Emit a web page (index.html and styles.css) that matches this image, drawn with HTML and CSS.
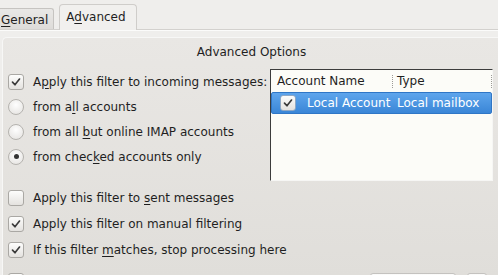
FILE: index.html
```html
<!DOCTYPE html>
<html>
<head>
<meta charset="utf-8">
<link rel="stylesheet" href="styles.css">
</head>
<body>
<div class="tabbar">
  <div class="tab tab-general"><u>G</u>eneral</div>
  <div class="tab tab-active">A<u>d</u>vanced</div>
</div>
<div class="panel">
  <div class="title">Advanced Options</div>
  <div class="top">
    <div class="left">
      <div class="row">
        <span class="cb"><svg viewBox="0 0 16 16"><path d="M4 8.2 L6.8 11.2 L12 4.6"/></svg></span>
        <span>A<u>p</u>ply this filter to incoming messages:</span>
      </div>
      <div class="row"><span class="radio"></span><span>from a<u>l</u>l accounts</span></div>
      <div class="row"><span class="radio"></span><span>from all <u>b</u>ut online IMAP accounts</span></div>
      <div class="row"><span class="radio on"></span><span>from chec<u>k</u>ed accounts only</span></div>
    </div>
    <div class="list">
      <div class="lhead">
        <div class="hc c1">Account Name</div>
        <div class="hc c2">Type</div>
      </div>
      <div class="lrow sel">
        <div class="c1"><span class="cb small"><svg viewBox="0 0 16 16"><path d="M4 8.2 L6.8 11.2 L12 4.6"/></svg></span><span class="ltxt">Local Account</span></div>
        <div class="c2">Local mailbox</div>
      </div>
    </div>
  </div>
  <div class="rows">
    <div class="row r2"><span class="cb"></span><span>Apply this filter to <u>s</u>ent messages</span></div>
    <div class="row r2"><span class="cb"><svg viewBox="0 0 16 16"><path d="M4 8.2 L6.8 11.2 L12 4.6"/></svg></span><span>Apply this filter on manual filtering</span></div>
    <div class="row r2"><span class="cb"><svg viewBox="0 0 16 16"><path d="M4 8.2 L6.8 11.2 L12 4.6"/></svg></span><span>If this filter <u>m</u>atches, stop processing here</span></div>
    <div class="lastrow"><span class="cb"></span><span class="btn b1"></span><span class="btn b2"></span></div>
  </div>
</div>
</body>
</html>
```
FILE: styles.css
```css
html, body {
  margin: 0;
  padding: 0;
}
body {
  width: 498px;
  height: 275px;
  overflow: hidden;
  background: #efeeec;
  font-family: "DejaVu Sans", sans-serif;
  font-size: 12px;
  color: #1f1f1f;
}
u {
  text-decoration: underline;
  text-underline-offset: 2px;
}
.tabbar {
  height: 29px;
  border-bottom: 1px solid #d3d1ce;
  box-shadow: 0 1px 0 #fbfbfa;
  display: flex;
  align-items: flex-end;
}
.tab {
  box-sizing: border-box;
  white-space: nowrap;
}
.tab-general {
  margin-left: -9px;
  height: 21px;
  padding: 4px 5px 0 9px;
  background: linear-gradient(#e9e8e6, #dedcd9);
  border: 1px solid #c6c4c1;
  border-bottom: none;
  border-radius: 3px 3px 0 0;
  color: #222;
}
.tab-active {
  margin-left: 5px;
  height: 26px;
  margin-bottom: -1px;
  padding: 5px 10px 0 6px;
  background: #f1f0ee;
  border: 1px solid #cfcdca;
  border-bottom: none;
  border-radius: 4px 4px 0 0;
  position: relative;
  z-index: 1;
}
.panel {
  box-sizing: border-box;
  margin-top: 7px;
  margin-left: 2px;
  height: 238px;
  overflow: hidden;
  border-top: 1px solid #f7f7f6;
  border-left: 1px solid #f7f7f6;
  border-top-left-radius: 5px;
  background: linear-gradient(#e9e7e4, #e0deda);
  padding: 2px 5px 0 5px;
}
.title {
  height: 25px;
  line-height: 25px;
  text-align: center;
  padding-left: 2px;
}
.top {
  margin-top: 4px;
  display: flex;
  height: 114px;
}
.left {
  flex: 1;
}
.row {
  height: 25px;
  display: flex;
  align-items: center;
  white-space: nowrap;
}
.row.r2 {
  height: 26px;
}
.cb {
  box-sizing: border-box;
  width: 16px;
  height: 16px;
  flex: none;
  margin-right: 9px;
  border: 1px solid #aaa8a4;
  border-radius: 3px;
  background: linear-gradient(#fdfdfc, #e4e2df);
  display: inline-flex;
  align-items: center;
  justify-content: center;
}
.cb svg {
  width: 14px;
  height: 14px;
}
.cb path {
  fill: none;
  stroke: #3b3b3b;
  stroke-width: 1.9;
  stroke-linecap: round;
  stroke-linejoin: round;
}
.radio {
  box-sizing: border-box;
  width: 16px;
  height: 16px;
  flex: none;
  margin-right: 9px;
  border: 1px solid #b5b3af;
  border-radius: 50%;
  background: radial-gradient(circle at 50% 35%, #fefefe, #e3e1de);
  display: inline-flex;
  align-items: center;
  justify-content: center;
}
.radio.on::after {
  content: "";
  width: 5px;
  height: 5px;
  border-radius: 50%;
  background: #333;
}
.list {
  box-sizing: border-box;
  width: 223px;
  height: 112px;
  background: #fcfcf8;
  border-top: 1px solid #3c3c3c;
  border-left: 1px solid #3c3c3c;
  border-right: 1px solid #f6f6f4;
  border-bottom: 1px solid #f6f6f4;
}
.lhead {
  height: 22px;
  display: flex;
  align-items: center;
}
.hc {
  position: relative;
  box-sizing: border-box;
}
.lhead .c1 {
  width: 122px;
  padding-left: 6px;
}
.lhead .c2 {
  flex: 1;
  padding-left: 4px;
}
.hc::after {
  content: "";
  position: absolute;
  right: 0;
  top: 1px;
  height: 13px;
  border-right: 1px dotted #9c9a96;
}
.lrow {
  box-sizing: border-box;
  height: 22px;
  display: flex;
  align-items: center;
  white-space: nowrap;
}
.lrow.sel {
  background: linear-gradient(#5ea5ec, #3a86d7);
  border: 1px solid #2f76c6;
  border-radius: 2px;
  color: #ffffff;
}
.lrow .c1 {
  box-sizing: border-box;
  width: 121px;
  padding-left: 8px;
  display: flex;
  align-items: center;
}
.lrow .c1 .cb {
  margin-right: 11px;
  border-color: #8fa9c6;
}
.lrow .c2 {
  padding-left: 4px;
}
.rows {
  margin-top: 2px;
}
.lastrow {
  display: flex;
  align-items: flex-start;
  padding-top: 10px;
}
.btn {
  box-sizing: border-box;
  height: 22px;
  background: linear-gradient(#fbfbfa, #ecebe9);
  border: 1px solid #c4c2bf;
  border-radius: 3px;
}
.b1 {
  width: 86px;
  margin-left: auto;
}
.b2 {
  width: 20px;
  margin-left: 11px;
  margin-right: 6px;
}
```
